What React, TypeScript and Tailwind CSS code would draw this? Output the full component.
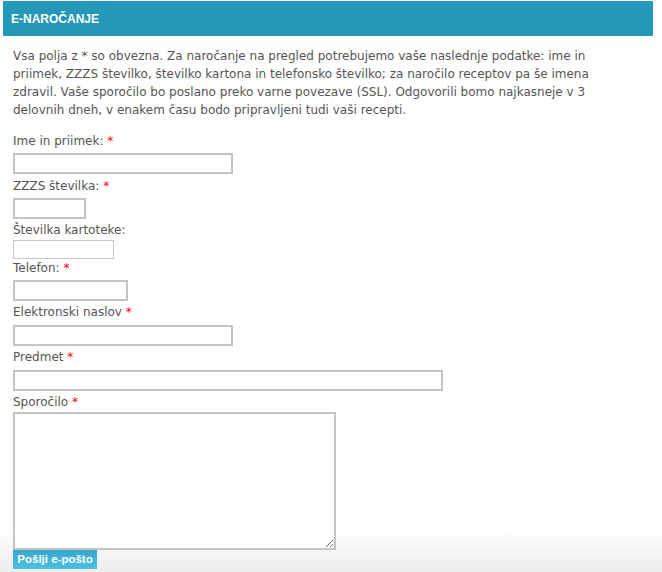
import React from "react";

const font = { fontFamily: '"DejaVu Sans", Verdana, sans-serif' };

function Label({ text, req, className }: { text: string; req?: boolean; className: string }) {
  return (
    <div className={`h-[18px] text-[12px] leading-[18px] text-[#555] ${className}`}>
      {text}
      {req && <span className="text-[#f00]"> *</span>}
    </div>
  );
}

export default function App() {
  return (
    <div
      className="min-h-[572px] w-full pt-px bg-[linear-gradient(to_bottom,#ffffff_0px,#ffffff_528px,#ededed_572px)]"
      style={font}
    >
      <div className="ml-[3px] w-[650px]">
        <div className="flex h-[35px] items-center bg-[#2398b9] pl-[8px]">
          <span className="font-['Liberation_Sans',Arial,sans-serif] text-[12px] font-bold text-white">
            E-NAROČANJE
          </span>
        </div>
        <div className="pl-[10px]">
          <p className="mt-[11px] text-[12px] leading-[18px] text-[#555]">
            Vsa polja z * so obvezna. Za naročanje na pregled potrebujemo vaše naslednje podatke: ime in
            <br />
            priimek, ZZZS številko, številko kartona in telefonsko številko; za naročilo receptov pa še imena
            <br />
            zdravil. Vaše sporočilo bo poslano preko varne povezave (SSL). Odgovorili bomo najkasneje v 3
            <br />
            delovnih dneh, v enakem času bodo pripravljeni tudi vaši recepti.
          </p>

          <Label text="Ime in priimek:" req className="mt-[13px]" />
          <div className="mt-[3px] h-[21px] w-[220px] border-2 border-[#c4c4c4] bg-white" />

          <Label text="ZZZS številka:" req className="mt-[3px]" />
          <div className="mt-[3px] h-[21px] w-[73px] border-2 border-[#c4c4c4] bg-white" />

          <Label text="Številka kartoteke:" className="mt-[2px]" />
          <div className="mt-[1px] h-[19px] w-[101px] border border-[#c8c8c8] bg-white" />

          <Label text="Telefon:" req className="mt-0" />
          <div className="mt-[3px] h-[21px] w-[115px] border-2 border-[#c4c4c4] bg-white" />

          <Label text="Elektronski naslov" req className="mt-[2px]" />
          <div className="mt-[4px] h-[21px] w-[220px] border-2 border-[#c4c4c4] bg-white" />

          <Label text="Predmet" req className="mt-[2px]" />
          <div className="mt-[4px] h-[21px] w-[430px] border-2 border-[#c4c4c4] bg-white" />

          <Label text="Sporočilo" req className="mt-[2px]" />
          <textarea
            className="mt-[1px] block h-[138px] w-[323px] resize border-2 border-[#c4c4c4] bg-white outline-none"
            defaultValue=""
          />
          <button className="flex h-[19px] w-[84px] items-center justify-center bg-[linear-gradient(to_bottom,#35a8cc,#4cc0e2)] font-['Liberation_Sans',Arial,sans-serif] text-[11.5px] font-bold text-white">
            Pošlji e-pošto
          </button>
        </div>
      </div>
    </div>
  );
}
